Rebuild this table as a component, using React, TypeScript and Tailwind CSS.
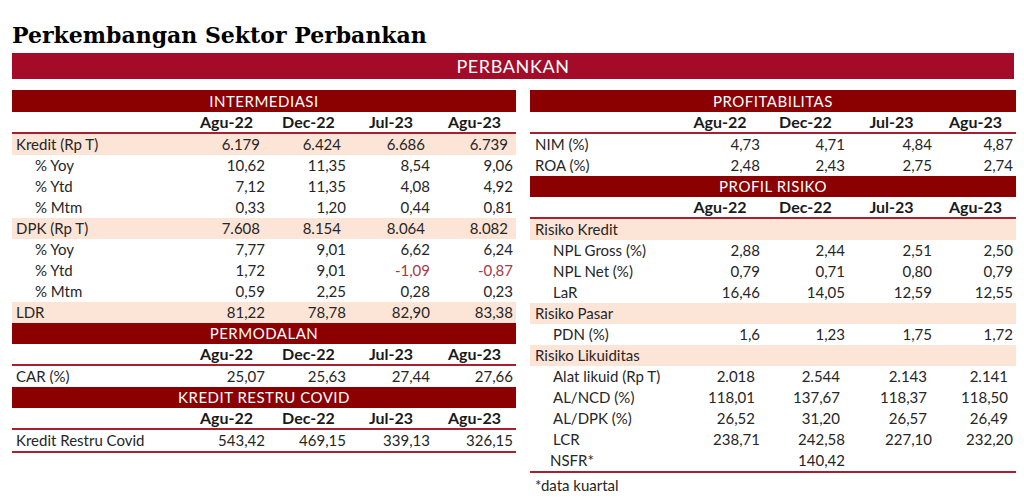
const PERIODS = ['Agu-22', 'Dec-22', 'Jul-23', 'Agu-23'];

type Row = {
  label: string;
  values?: string[];
  kind?: 'main' | 'sub' | 'group';
  shift?: boolean;
  neg?: boolean[];
  indent?: string;
};

const LEFT_COLS = 'grid-cols-[173px_83px_81px_84px_83px]';
const RIGHT_COLS = 'grid-cols-[147px_86px_85px_87px_81px]';

function Bar({ title, h = 'h-[22px]' }: { title: string; h?: string }) {
  return (
    <div className={`${h} bg-[#8b0000] flex items-center justify-center text-white text-[15px] tracking-[0.5px] leading-none`}>
      {title}
    </div>
  );
}

function HeaderRow({ cols }: { cols: string }) {
  return (
    <div className={`grid ${cols} h-[22px] border-b-2 border-[#a8202f] items-center`}>
      <div />
      {PERIODS.map((p) => (
        <div key={p} className="text-center font-bold text-[16px] text-[#1a1a1a] leading-none">
          {p}
        </div>
      ))}
    </div>
  );
}

function DataRow({ row, cols }: { row: Row; cols: string }) {
  const peach = row.kind === 'main' || row.kind === 'group';
  return (
    <div className={`grid ${cols} h-[21px] items-center text-[15px] leading-none text-[#262626] ${peach ? 'bg-[#fce4d6]' : ''}`}>
      <div className={row.indent ?? (row.kind === 'sub' ? 'pl-[23px]' : 'pl-[4px]')}>{row.label}</div>
      {(row.values ?? ['', '', '', '']).map((v, i) => (
        <div
          key={i}
          className={`text-right ${row.shift ? 'pr-[8px]' : 'pr-[3px]'} ${row.neg?.[i] ? 'text-[#a33a48]' : ''}`}
        >
          {v}
        </div>
      ))}
    </div>
  );
}

const intermediasi: Row[] = [
  { label: 'Kredit (Rp T)', values: ['6.179', '6.424', '6.686', '6.739'], kind: 'main', shift: true },
  { label: '% Yoy', values: ['10,62', '11,35', '8,54', '9,06'], kind: 'sub' },
  { label: '% Ytd', values: ['7,12', '11,35', '4,08', '4,92'], kind: 'sub' },
  { label: '% Mtm', values: ['0,33', '1,20', '0,44', '0,81'], kind: 'sub' },
  { label: 'DPK (Rp T)', values: ['7.608', '8.154', '8.064', '8.082'], kind: 'main', shift: true },
  { label: '% Yoy', values: ['7,77', '9,01', '6,62', '6,24'], kind: 'sub' },
  { label: '% Ytd', values: ['1,72', '9,01', '-1,09', '-0,87'], kind: 'sub', neg: [false, false, true, true] },
  { label: '% Mtm', values: ['0,59', '2,25', '0,28', '0,23'], kind: 'sub' },
  { label: 'LDR', values: ['81,22', '78,78', '82,90', '83,38'], kind: 'main' },
];

const profit: Row[] = [
  { label: 'NIM (%)', values: ['4,73', '4,71', '4,84', '4,87'], indent: 'pl-[5px]' },
  { label: 'ROA (%)', values: ['2,48', '2,43', '2,75', '2,74'], indent: 'pl-[5px]' },
];

const risiko: Row[] = [
  { label: 'Risiko Kredit', kind: 'group', indent: 'pl-[5px]' },
  { label: 'NPL Gross (%)', values: ['2,88', '2,44', '2,51', '2,50'], kind: 'sub' },
  { label: 'NPL Net (%)', values: ['0,79', '0,71', '0,80', '0,79'], kind: 'sub' },
  { label: 'LaR', values: ['16,46', '14,05', '12,59', '12,55'], kind: 'sub' },
  { label: 'Risiko Pasar', kind: 'group', indent: 'pl-[5px]' },
  { label: 'PDN (%)', values: ['1,6', '1,23', '1,75', '1,72'], kind: 'sub' },
  { label: 'Risiko Likuiditas', kind: 'group', indent: 'pl-[5px]' },
  { label: 'Alat likuid (Rp T)', values: ['2.018', '2.544', '2.143', '2.141'], kind: 'sub', shift: true },
  { label: 'AL/NCD (%)', values: ['118,01', '137,67', '118,37', '118,50'], kind: 'sub', shift: true },
  { label: 'AL/DPK (%)', values: ['26,52', '31,20', '26,57', '26,49'], kind: 'sub', shift: true },
  { label: 'LCR', values: ['238,71', '242,58', '227,10', '232,20'], kind: 'sub' },
  { label: 'NSFR*', values: ['', '140,42', '', ''], kind: 'sub', indent: 'pl-[20px]' },
];

export default function App() {
  return (
    <div className="w-[1024px] h-[504px] bg-white overflow-hidden font-['Lato',sans-serif]">
      {/* Title */}
      <div className="pl-[12px] pt-[24px] h-[53px] font-['DejaVu_Serif',serif] font-bold text-[22px] leading-none text-black">
        Perkembangan Sektor Perbankan
      </div>

      {/* Banner */}
      <div className="mx-[12px] w-[1002px] h-[26px] bg-[#a30b28] flex items-center justify-center text-white text-[18px] tracking-[0.6px] leading-none">
        PERBANKAN
      </div>

      <div className="flex gap-[14px] pl-[12px] mt-[11px]">
        {/* Left panel */}
        <div className="w-[504px] flex flex-col">
          <Bar title="INTERMEDIASI" />
          <HeaderRow cols={LEFT_COLS} />
          {intermediasi.map((r, i) => (
            <DataRow key={i} row={r} cols={LEFT_COLS} />
          ))}
          <Bar title="PERMODALAN" h="h-[21px]" />
          <HeaderRow cols={LEFT_COLS} />
          <DataRow row={{ label: 'CAR (%)', values: ['25,07', '25,63', '27,44', '27,66'] }} cols={LEFT_COLS} />
          <Bar title="KREDIT RESTRU COVID" h="h-[21px]" />
          <HeaderRow cols={LEFT_COLS} />
          <div className="border-b-2 border-[#a8202f]">
            <DataRow row={{ label: 'Kredit Restru Covid', values: ['543,42', '469,15', '339,13', '326,15'] }} cols={LEFT_COLS} />
          </div>
        </div>

        {/* Right panel */}
        <div className="w-[486px] flex flex-col">
          <Bar title="PROFITABILITAS" />
          <HeaderRow cols={RIGHT_COLS} />
          {profit.map((r, i) => (
            <DataRow key={i} row={r} cols={RIGHT_COLS} />
          ))}
          <Bar title="PROFIL RISIKO" h="h-[21px]" />
          <HeaderRow cols={RIGHT_COLS} />
          <div className="border-b-2 border-[#a8202f]">
            {risiko.map((r, i) => (
              <DataRow key={i} row={r} cols={RIGHT_COLS} />
            ))}
          </div>
          <div className="pl-[5px] pt-[5px] text-[15px] leading-none text-[#262626]">*data kuartal</div>
        </div>
      </div>
    </div>
  );
}
